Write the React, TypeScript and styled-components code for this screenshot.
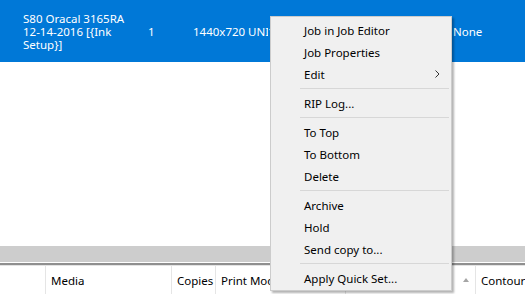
import React from "react";
import styled, { createGlobalStyle } from "styled-components";

const GlobalStyle = createGlobalStyle`
  html, body {
    margin: 0;
    padding: 0;
    background: #fff;
  }
  body {
    font-family: "Noto Sans", "Open Sans", sans-serif;
    font-size: 11.5px;
    color: #000;
  }
`;

const Screen = styled.div`
  position: relative;
  width: 525px;
  height: 294px;
  overflow: hidden;
  display: flex;
  flex-direction: column;
  background: #fff;
`;

const JobRow = styled.div`
  flex: 0 0 62px;
  background: #0078d7;
  color: #fff;
  display: grid;
  grid-template-columns: 23px 125px 45px 75px 185px 1fr;
  align-items: center;
  white-space: nowrap;
`;

const Cell = styled.div`
  overflow: hidden;
  line-height: 13px;
`;

const Line = styled.div`
  line-height: 13px;
`;

const Blank = styled.div`
  flex: 1;
  background: #fff;
`;

const Splitter = styled.div`
  flex: 0 0 16px;
  background: #cdcdcd;
  border-bottom: 1px solid #fff;
`;

const HeaderRule = styled.div`
  flex: 0 0 2px;
  background: #8f8f8f;
  border-bottom: 1px solid #e3e3e3;
`;

const Header = styled.div`
  flex: 0 0 28px;
  display: grid;
  grid-template-columns: 46px 126px 44px 130px 130px 1fr;
  white-space: nowrap;
`;

const HeadCell = styled.div<{ $last?: boolean }>`
  box-sizing: border-box;
  display: flex;
  align-items: center;
  justify-content: space-between;
  padding: 0 6px 0 5px;
  border-right: ${(p) => (p.$last ? "none" : "1px solid #e5e5e5")};
  overflow: hidden;
`;

const SortArrow = styled.span`
  width: 0;
  height: 0;
  border-left: 3px solid transparent;
  border-right: 3px solid transparent;
  border-bottom: 4px solid #a5a5a5;
`;

const Menu = styled.div`
  position: absolute;
  left: 270px;
  top: 16px;
  width: 182px;
  box-sizing: border-box;
  padding: 2px 2px 1px;
  background: #f0f0f0;
  border: 1px solid #cccccc;
  box-shadow: 2px 2px 2px rgba(0, 0, 0, 0.3);
`;

const Item = styled.div`
  height: 22px;
  display: flex;
  align-items: center;
  justify-content: space-between;
  padding: 0 9px 0 31px;
  white-space: nowrap;
`;

const Separator = styled.div`
  height: 7px;
  display: flex;
  align-items: center;
  padding-left: 27px;

  &::after {
    content: "";
    flex: 1;
    height: 1px;
    background: #d7d7d7;
  }
`;

const Chevron = () => (
  <svg width="5" height="8" viewBox="0 0 5 8">
    <path d="M0.5 0.5 L4 4 L0.5 7.5" fill="none" stroke="#333" strokeWidth="1" />
  </svg>
);

type Entry = { label?: string; submenu?: boolean; sep?: boolean };

const entries: Entry[] = [
  { label: "Job in Job Editor" },
  { label: "Job Properties" },
  { label: "Edit", submenu: true },
  { sep: true },
  { label: "RIP Log..." },
  { sep: true },
  { label: "To Top" },
  { label: "To Bottom" },
  { label: "Delete" },
  { sep: true },
  { label: "Archive" },
  { label: "Hold" },
  { label: "Send copy to..." },
  { sep: true },
  { label: "Apply Quick Set..." },
];

const App = () => {
  return (
    <>
      <GlobalStyle />
      <Screen>
        <JobRow>
          <Cell />
          <Cell>
            <Line>S80 Oracal 3165RA</Line>
            <Line>12-14-2016 [{"{"}Ink</Line>
            <Line>Setup{"}"}]</Line>
          </Cell>
          <Cell>1</Cell>
          <Cell>1440x720 UNI</Cell>
          <Cell>1</Cell>
          <Cell>None</Cell>
        </JobRow>
        <Blank />
        <Splitter />
        <HeaderRule />
        <Header>
          <HeadCell />
          <HeadCell>Media</HeadCell>
          <HeadCell>Copies</HeadCell>
          <HeadCell>Print Mode</HeadCell>
          <HeadCell>
            <span />
            <SortArrow />
          </HeadCell>
          <HeadCell $last>Contour Cut</HeadCell>
        </Header>
        <Menu>
          {entries.map((e, i) =>
            e.sep ? (
              <Separator key={i} />
            ) : (
              <Item key={i}>
                <span>{e.label}</span>
                {e.submenu && <Chevron />}
              </Item>
            )
          )}
        </Menu>
      </Screen>
    </>
  );
};

export default App;
